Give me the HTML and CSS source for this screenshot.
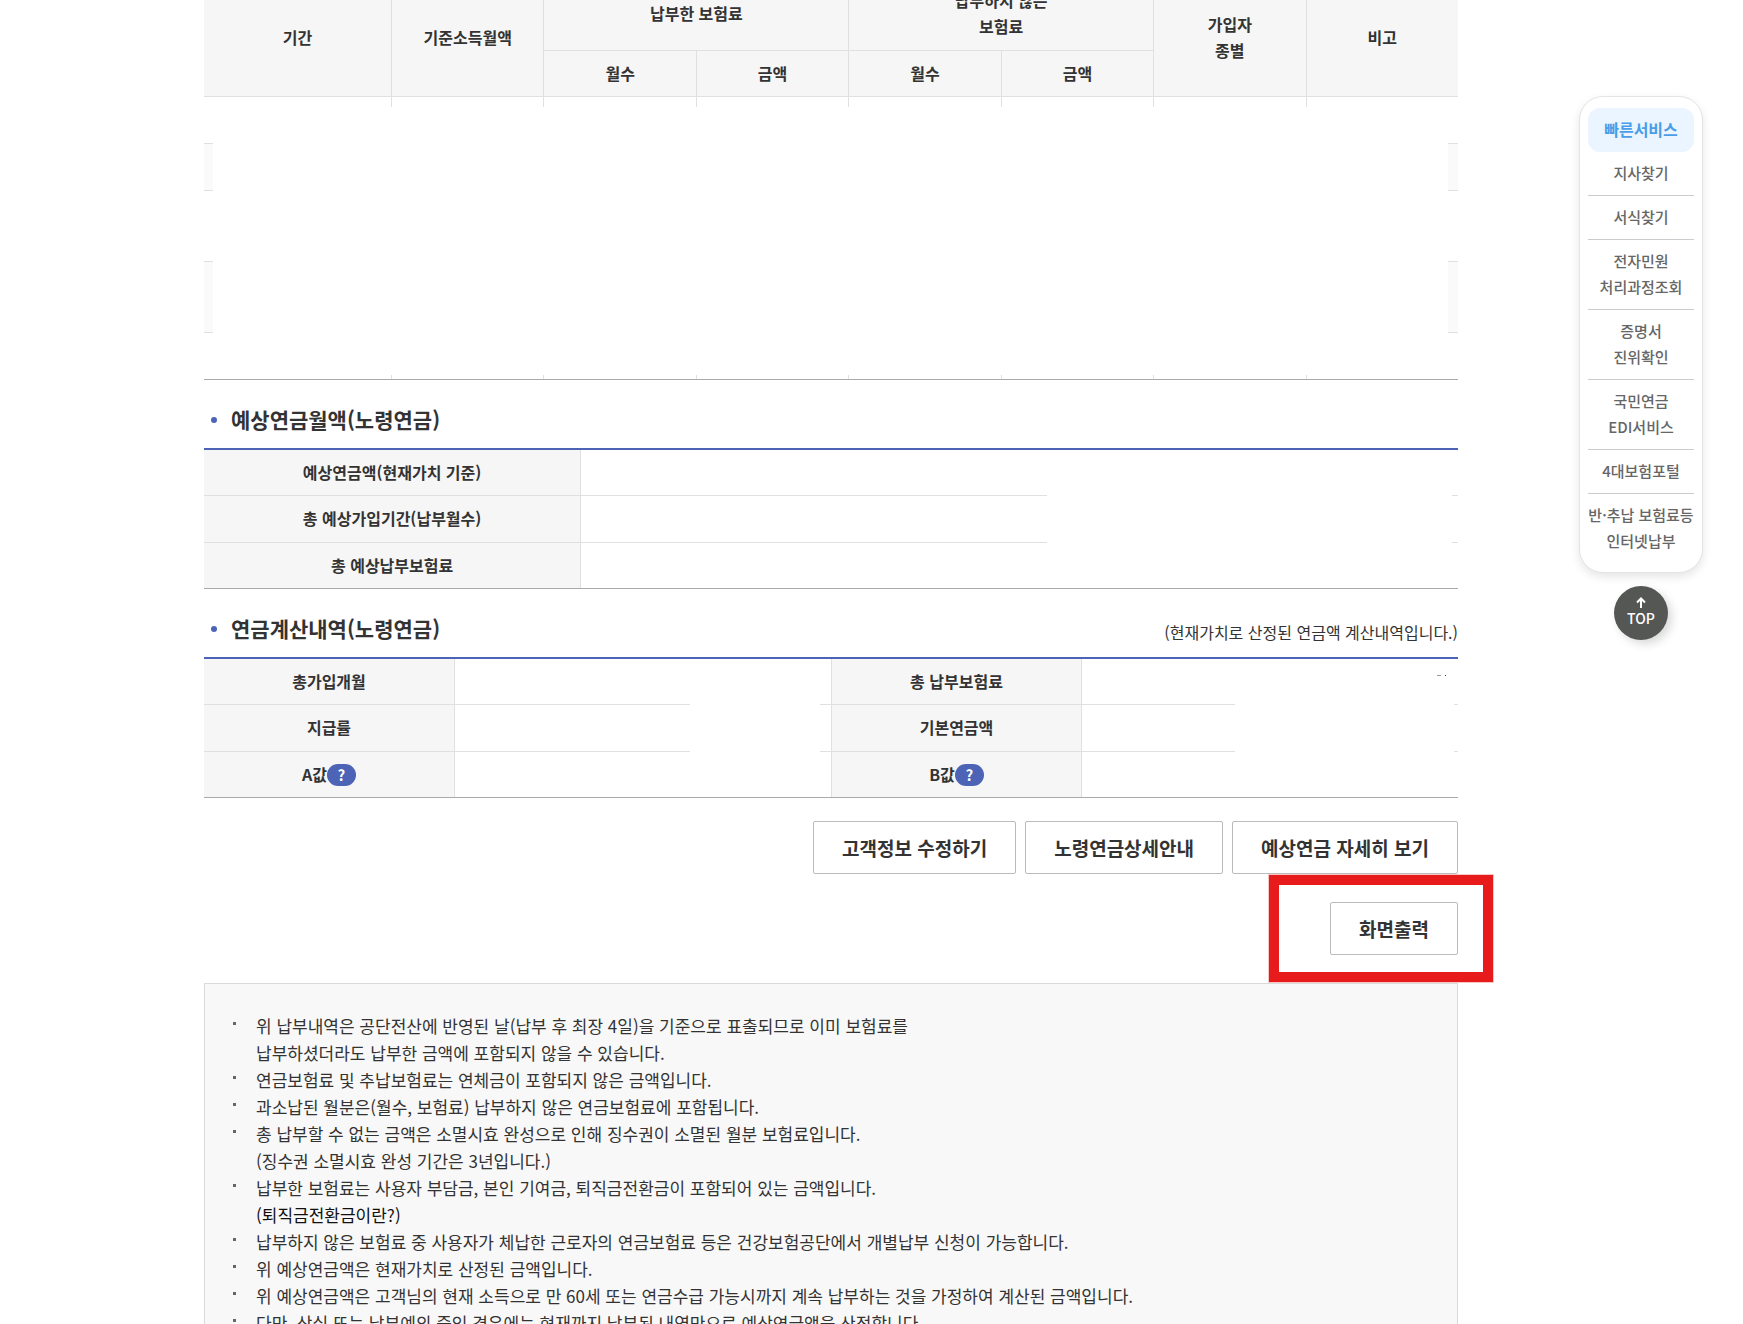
FILE: index.html
```html
<!DOCTYPE html>
<html lang="ko">
<head>
<meta charset="utf-8">
<meta name="viewport" content="width=device-width, initial-scale=1">
<title>예상연금월액</title>
<link rel="stylesheet" href="styles.css">
</head>
<body>
<div class="page">
  <main class="content">
    <div class="table-wrap history-wrap">
      <table class="history">
        <colgroup>
          <col class="col-period"><col><col><col><col><col><col><col>
        </colgroup>
        <thead>
          <tr class="head-top">
            <th rowspan="2" scope="col">기간</th>
            <th rowspan="2" scope="col">기준소득월액</th>
            <th colspan="2" scope="colgroup">납부한 보험료</th>
            <th colspan="2" scope="colgroup">납부하지 않은<br>보험료</th>
            <th rowspan="2" scope="col">가입자<br>종별</th>
            <th rowspan="2" scope="col">비고</th>
          </tr>
          <tr class="head-sub">
            <th scope="col">월수</th>
            <th scope="col">금액</th>
            <th scope="col">월수</th>
            <th scope="col">금액</th>
          </tr>
        </thead>
        <tbody>
          <tr><td></td><td></td><td></td><td></td><td></td><td></td><td></td><td></td></tr>
          <tr><td></td><td></td><td></td><td></td><td></td><td></td><td></td><td></td></tr>
          <tr class="tall"><td></td><td></td><td></td><td></td><td></td><td></td><td></td><td></td></tr>
          <tr class="tall"><td></td><td></td><td></td><td></td><td></td><td></td><td></td><td></td></tr>
          <tr><td></td><td></td><td></td><td></td><td></td><td></td><td></td><td></td></tr>
        </tbody>
      </table>
      <span class="mask mask-history"></span>
    </div>

    <div class="section-head">
      <h2>예상연금월액(노령연금)</h2>
    </div>
    <div class="table-wrap">
      <table class="info">
        <colgroup><col class="w30"><col></colgroup>
        <tbody>
          <tr><th scope="row">예상연금액(현재가치 기준)</th><td></td></tr>
          <tr><th scope="row">총 예상가입기간(납부월수)</th><td></td></tr>
          <tr><th scope="row">총 예상납부보험료</th><td></td></tr>
        </tbody>
      </table>
      <span class="mask mask-amount"></span>
    </div>

    <div class="section-head">
      <h2>연금계산내역(노령연금)</h2>
      <p>(현재가치로 산정된 연금액 계산내역입니다.)</p>
    </div>
    <div class="table-wrap">
      <table class="info">
        <colgroup><col class="col-label"><col><col class="col-label"><col></colgroup>
        <tbody>
          <tr><th scope="row">총가입개월</th><td></td><th scope="row">총 납부보험료</th><td></td></tr>
          <tr><th scope="row">지급률</th><td></td><th scope="row">기본연금액</th><td></td></tr>
          <tr>
            <th scope="row">A값<button type="button" class="help" aria-label="A값 도움말">?</button></th><td></td>
            <th scope="row">B값<button type="button" class="help" aria-label="B값 도움말">?</button></th><td></td>
          </tr>
        </tbody>
      </table>
      <span class="mask mask-left"></span>
      <span class="mask mask-right"></span>
      <svg class="remnant" width="11" height="2" viewBox="0 0 11 2" aria-hidden="true"><path d="M0 .5h4" stroke="#999"/><path d="M8 .5h1" stroke="#333"/></svg>
    </div>

    <div class="actions">
      <button type="button" class="btn">고객정보 수정하기</button>
      <button type="button" class="btn">노령연금상세안내</button>
      <button type="button" class="btn">예상연금 자세히 보기</button>
    </div>
    <div class="actions print">
      <div class="print-target">
        <button type="button" class="btn">화면출력</button>
        <span class="highlight"></span>
      </div>
    </div>

    <section class="notice">
      <ul>
        <li>위 납부내역은 공단전산에 반영된 날(납부 후 최장 4일)을 기준으로 표출되므로 이미 보험료를<br>납부하셨더라도 납부한 금액에 포함되지 않을 수 있습니다.</li>
        <li>연금보험료 및 추납보험료는 연체금이 포함되지 않은 금액입니다.</li>
        <li>과소납된 월분은(월수, 보험료) 납부하지 않은 연금보험료에 포함됩니다.</li>
        <li>총 납부할 수 없는 금액은 소멸시효 완성으로 인해 징수권이 소멸된 월분 보험료입니다.<br>(징수권 소멸시효 완성 기간은 3년입니다.)</li>
        <li>납부한 보험료는 사용자 부담금, 본인 기여금, 퇴직금전환금이 포함되어 있는 금액입니다.<br><a href="#">(퇴직금전환금이란?)</a></li>
        <li>납부하지 않은 보험료 중 사용자가 체납한 근로자의 연금보험료 등은 건강보험공단에서 개별납부 신청이 가능합니다.</li>
        <li>위 예상연금액은 현재가치로 산정된 금액입니다.</li>
        <li>위 예상연금액은 고객님의 현재 소득으로 만 60세 또는 연금수급 가능시까지 계속 납부하는 것을 가정하여 계산된 금액입니다.</li>
        <li>다만, 상실 또는 납부예외 중인 경우에는 현재까지 납부된 내역만으로 예상연금액을 산정합니다.</li>
      </ul>
    </section>
  </main>

  <aside class="quick">
    <nav class="quick-panel" aria-label="빠른서비스">
      <strong>빠른서비스</strong>
      <ul>
        <li><a href="#">지사찾기</a></li>
        <li><a href="#">서식찾기</a></li>
        <li><a href="#">전자민원<br>처리과정조회</a></li>
        <li><a href="#">증명서<br>진위확인</a></li>
        <li><a href="#">국민연금<br>EDI서비스</a></li>
        <li><a href="#">4대보험포털</a></li>
        <li><a href="#">반·추납 보험료등<br>인터넷납부</a></li>
      </ul>
    </nav>
    <button type="button" class="top">
      <svg width="10" height="11" viewBox="0 0 10 11" fill="none" stroke="#fff" stroke-width="2" aria-hidden="true"><path d="M5 11V2M1 5.5L5 1.5L9 5.5"/></svg>
      TOP
    </button>
  </aside>
</div>
</body>
</html>
```

FILE: styles.css
```css
* {
  box-sizing: border-box;
}

body {
  height: 100vh;
  margin: 0;
  overflow: hidden;
  background: #fff;
  color: #333;
  font: 16px/26px "Noto Sans CJK KR", "Noto Sans", sans-serif;
}

ul {
  margin: 0;
  padding: 0;
  list-style: none;
}

a {
  color: inherit;
  text-decoration: none;
}

button {
  font-family: inherit;
  cursor: pointer;
}

.page {
  display: flex;
  align-items: flex-start;
  gap: 121px;
  padding: 0 40px 0 204px;
}

.content {
  flex: 1;
  min-width: 0;
}

/* Tables */
.table-wrap {
  position: relative;
}

/* The page is scrolled part way into the history table */
.history-wrap {
  margin-top: -22px;
}

table {
  width: 100%;
  table-layout: fixed;
  border-collapse: separate;
  border-spacing: 0;
  border-bottom: 1px solid #aaa;
}

th,
td {
  padding: 0;
  border-bottom: 1px solid #e0e0e0;
  border-left: 1px solid #e0e0e0;
  vertical-align: middle;
}

th {
  padding-bottom: 2px;
  background: #f6f6f6;
  font-weight: 700;
}

th[rowspan] {
  padding-bottom: 0;
}

tr > :first-child {
  border-left: 0;
}

.head-sub > :first-child {
  border-left: 1px solid #e0e0e0;
}

tbody tr:last-child > * {
  border-bottom: 0;
}

.col-period {
  width: 187px;
}

.col-label {
  width: 250px;
}

.w30 {
  width: 30%;
}

.head-top {
  height: 73px;
}

.head-sub {
  height: 46px;
}

.history tbody tr {
  height: 47px;
}

.history tbody tr.tall {
  height: 71px;
}

.history tbody tr:last-child {
  height: 46px;
}

.history tbody tr:nth-child(even) {
  background: #fafafa;
}

.info {
  border-top: 2px solid #4c63b6;
}

.info tr {
  height: 46px;
}

.info tr:nth-child(2) {
  height: 47px;
}

.info tr:last-child {
  height: 45px;
}

/* White areas that hide personal figures */
.mask {
  position: absolute;
  background: #fff;
}

.mask-history {
  right: 10px;
  bottom: 5px;
  left: 9px;
  height: 268px;
}

.mask-amount {
  top: 2px;
  right: 6px;
  bottom: 1px;
  width: 405px;
}

.mask-left {
  top: 20px;
  right: calc(50% + 11px);
  bottom: 1px;
  width: 130px;
}

.mask-right {
  top: 20px;
  right: 4px;
  bottom: 1px;
  width: 219px;
}

.remnant {
  position: absolute;
  top: 18px;
  right: 10px;
}

.section-head {
  display: flex;
  align-items: center;
  justify-content: space-between;
  height: 68px;
  padding-top: 10px;
}

h2 {
  display: flex;
  align-items: center;
  gap: 14px;
  margin: 0;
  padding-left: 7px;
  font-size: 21px;
  line-height: 32px;
}

h2::before {
  width: 6px;
  height: 6px;
  margin-top: 2px;
  border-radius: 50%;
  background: #4c63b6;
  content: "";
}

.section-head p {
  margin: 8px 0 0;
}

.help {
  width: 29px;
  height: 22px;
  padding: 0;
  border: 0;
  border-radius: 11px;
  background: #4c63b6;
  color: #fff;
  font-size: 15px;
  font-weight: 700;
  line-height: 22px;
}

/* Buttons */
.actions {
  display: flex;
  justify-content: flex-end;
  gap: 9px;
  margin-top: 23px;
}

.print {
  margin: 28px 0;
}

.print-target {
  position: relative;
}

.btn {
  height: 53px;
  padding: 0 28px;
  border: 1px solid #bbb;
  border-radius: 2px;
  background: #fff;
  color: #333;
  font-size: 19px;
  font-weight: 700;
}

.highlight {
  position: absolute;
  inset: -27px -35px -27px -61px;
  border: 10px solid #e71b1b;
  box-shadow: 0 0 0 1px rgba(231, 27, 27, 0.25);
  pointer-events: none;
}

.notice {
  padding: 28px;
  border: 1px solid #dadada;
  background: #f8f8f8;
  font-size: 17px;
  line-height: 27px;
}

.notice li {
  position: relative;
  padding-left: 23px;
}

.notice li::before {
  position: absolute;
  top: 10px;
  left: 0;
  width: 3px;
  height: 3px;
  background: #666;
  content: "";
}

.notice a {
  color: #111;
}

/* Quick service menu */
.quick {
  display: flex;
  flex: none;
  flex-direction: column;
  align-items: center;
  gap: 13px;
  width: 124px;
  margin-top: 96px;
}

.quick-panel {
  width: 100%;
  padding: 11px 8px 9px;
  border: 1px solid #e4e4e4;
  border-radius: 24px;
  background: #fff;
  box-shadow: 0 4px 10px rgba(0, 0, 0, 0.1);
  color: #666;
  text-align: center;
}

.quick-panel strong {
  display: block;
  padding-bottom: 2px;
  border-radius: 12px;
  background: #eaf5ff;
  color: #4a9de8;
  line-height: 42px;
}

.quick-panel li {
  padding: 8px 0 9px;
  border-bottom: 1px solid #ccc;
  font-size: 15px;
  font-weight: 500;
  line-height: 26px;
  white-space: nowrap;
}

.quick-panel li:last-child {
  border-bottom: 0;
}

.top {
  display: flex;
  flex-direction: column;
  align-items: center;
  justify-content: center;
  width: 54px;
  height: 54px;
  padding: 0 0 2px;
  border: 0;
  border-radius: 50%;
  background: #555755;
  box-shadow: 4px 4px 10px rgba(0, 0, 0, 0.15);
  color: #fff;
  font-size: 14px;
  font-weight: 500;
  line-height: 20px;
}
```
